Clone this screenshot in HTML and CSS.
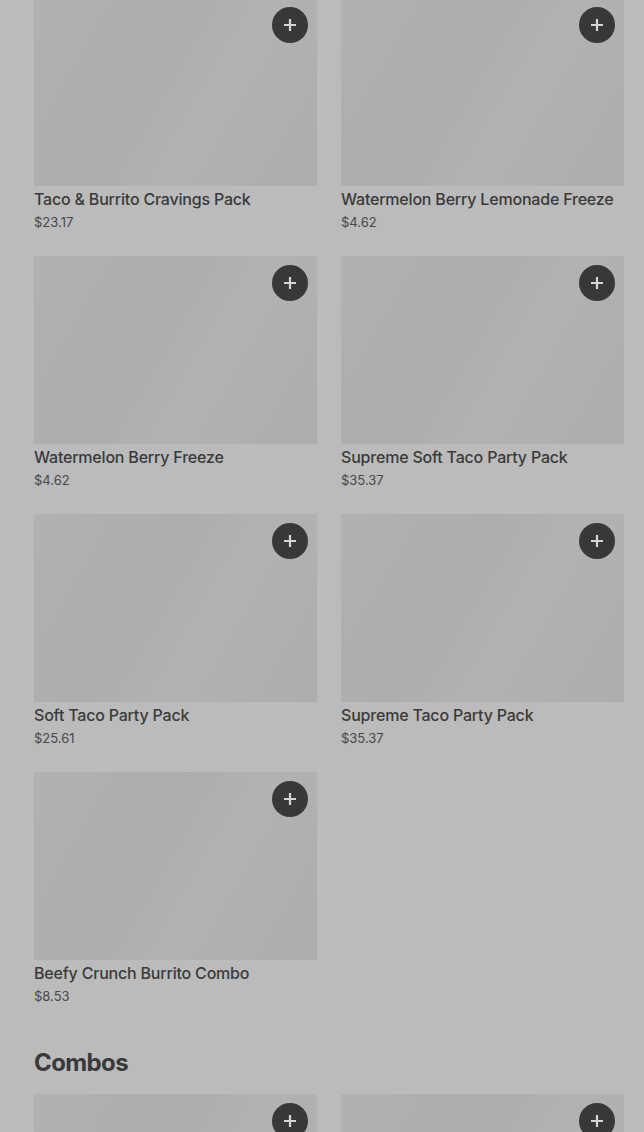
FILE: index.html
```html
<!DOCTYPE html>
<html lang="en">
<head>
    <meta charset="UTF-8">
    <meta name="viewport" content="width=device-width, initial-scale=1.0">
    <title>Menu</title>
    <link rel="stylesheet" href="styles.css">
</head>
<body>
<div class="menu">

    <div class="grid">
        <div class="item">
            <div class="photo">
                <button class="add"><svg width="14" height="14" viewBox="0 0 14 14"><path d="M7 1v12M1 7h12" stroke="currentColor" stroke-width="2.2"/></svg></button>
            </div>
            <div class="name">Taco &amp; Burrito Cravings Pack</div>
            <div class="price">$23.17</div>
        </div>
        <div class="item">
            <div class="photo">
                <button class="add"><svg width="14" height="14" viewBox="0 0 14 14"><path d="M7 1v12M1 7h12" stroke="currentColor" stroke-width="2.2"/></svg></button>
            </div>
            <div class="name">Watermelon Berry Lemonade Freeze</div>
            <div class="price">$4.62</div>
        </div>
        <div class="item">
            <div class="photo">
                <button class="add"><svg width="14" height="14" viewBox="0 0 14 14"><path d="M7 1v12M1 7h12" stroke="currentColor" stroke-width="2.2"/></svg></button>
            </div>
            <div class="name">Watermelon Berry Freeze</div>
            <div class="price">$4.62</div>
        </div>
        <div class="item">
            <div class="photo">
                <button class="add"><svg width="14" height="14" viewBox="0 0 14 14"><path d="M7 1v12M1 7h12" stroke="currentColor" stroke-width="2.2"/></svg></button>
            </div>
            <div class="name">Supreme Soft Taco Party Pack</div>
            <div class="price">$35.37</div>
        </div>
        <div class="item">
            <div class="photo">
                <button class="add"><svg width="14" height="14" viewBox="0 0 14 14"><path d="M7 1v12M1 7h12" stroke="currentColor" stroke-width="2.2"/></svg></button>
            </div>
            <div class="name">Soft Taco Party Pack</div>
            <div class="price">$25.61</div>
        </div>
        <div class="item">
            <div class="photo">
                <button class="add"><svg width="14" height="14" viewBox="0 0 14 14"><path d="M7 1v12M1 7h12" stroke="currentColor" stroke-width="2.2"/></svg></button>
            </div>
            <div class="name">Supreme Taco Party Pack</div>
            <div class="price">$35.37</div>
        </div>
        <div class="item">
            <div class="photo">
                <button class="add"><svg width="14" height="14" viewBox="0 0 14 14"><path d="M7 1v12M1 7h12" stroke="currentColor" stroke-width="2.2"/></svg></button>
            </div>
            <div class="name">Beefy Crunch Burrito Combo</div>
            <div class="price">$8.53</div>
        </div>
    </div>

    <h2 class="section">Combos</h2>

    <div class="grid">
        <div class="item">
            <div class="photo">
                <button class="add"><svg width="14" height="14" viewBox="0 0 14 14"><path d="M7 1v12M1 7h12" stroke="currentColor" stroke-width="2.2"/></svg></button>
            </div>
        </div>
        <div class="item">
            <div class="photo">
                <button class="add"><svg width="14" height="14" viewBox="0 0 14 14"><path d="M7 1v12M1 7h12" stroke="currentColor" stroke-width="2.2"/></svg></button>
            </div>
        </div>
    </div>

</div>
</body>
</html>
```

FILE: styles.css
```css
body{
    margin: 0;
    background-color: #bbbbbb;
    font-family: Inter, "Noto Sans", sans-serif;
    color: #3a3a3a;
    overflow: hidden;
}
.menu{
    margin-top: -2px;
    padding: 0 20px 0 34px;
}
.grid{
    display: grid;
    grid-template-columns: 283px 283px;
    column-gap: 24px;
    row-gap: 24px;
}
.photo{
    position: relative;
    height: 188px;
    background: linear-gradient(120deg, #b1b1b1 0%, #adadad 40%, #b2b2b2 60%, #adadad 100%);
}
.add{
    position: absolute;
    top: 9px;
    right: 9px;
    width: 36px;
    height: 36px;
    border: none;
    border-radius: 50%;
    background-color: #383838;
    color: #d6d6d6;
    display: flex;
    align-items: center;
    justify-content: center;
    padding: 0;
}
.name{
    margin-top: 1px;
    font-size: 16px;
    font-weight: 500;
    line-height: 24px;
    letter-spacing: -0.2px;
    white-space: nowrap;
}
.price{
    margin-top: 1px;
    font-size: 13px;
    line-height: 20px;
    color: #484848;
}
.section{
    margin: 41px 0 15px;
    font-size: 24px;
    line-height: 32px;
    font-weight: 700;
    letter-spacing: -0.6px;
    color: #393939;
}
```
